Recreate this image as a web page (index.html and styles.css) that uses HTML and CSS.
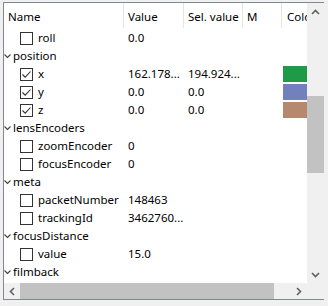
FILE: index.html
```html
<!DOCTYPE html>
<html>
<head>
<meta charset="utf-8">
<link rel="stylesheet" href="styles.css">
</head>
<body>
<div class="tree">
  <div class="viewport">
    <div class="header">
      <div class="c c1">Name</div>
      <div class="c c2">Value</div>
      <div class="c c3">Sel. value</div>
      <div class="c c4">M</div>
      <div class="c c5">Color</div>
    </div>
    <div class="rows">
      <div class="row"><div class="c c1 child"><span class="cb"></span>roll</div><div class="c c2">0.0</div><div class="c c3"></div><div class="c c4"></div><div class="c c5"></div></div>
      <div class="row"><div class="c c1 parent"><svg class="chev" width="7" height="5" viewBox="0 0 7 5"><path d="M0.5 0.5 L3.5 3.5 L6.5 0.5" fill="none" stroke="#404040" stroke-width="1.1"/></svg>position</div></div>
      <div class="row"><div class="c c1 child"><span class="cb on"><svg width="11" height="11" viewBox="0 0 11 11"><path d="M1.5 5.5 L4.2 8.2 L9.5 2.5" fill="none" stroke="#333" stroke-width="1.1"/></svg></span>x</div><div class="c c2">162.178...</div><div class="c c3">194.924...</div><div class="c c4"></div><div class="c c5"><span class="sw green"></span></div></div>
      <div class="row"><div class="c c1 child"><span class="cb on"><svg width="11" height="11" viewBox="0 0 11 11"><path d="M1.5 5.5 L4.2 8.2 L9.5 2.5" fill="none" stroke="#333" stroke-width="1.1"/></svg></span>y</div><div class="c c2">0.0</div><div class="c c3">0.0</div><div class="c c4"></div><div class="c c5"><span class="sw blue"></span></div></div>
      <div class="row"><div class="c c1 child"><span class="cb on"><svg width="11" height="11" viewBox="0 0 11 11"><path d="M1.5 5.5 L4.2 8.2 L9.5 2.5" fill="none" stroke="#333" stroke-width="1.1"/></svg></span>z</div><div class="c c2">0.0</div><div class="c c3">0.0</div><div class="c c4"></div><div class="c c5"><span class="sw brown"></span></div></div>
      <div class="row"><div class="c c1 parent"><svg class="chev" width="7" height="5" viewBox="0 0 7 5"><path d="M0.5 0.5 L3.5 3.5 L6.5 0.5" fill="none" stroke="#404040" stroke-width="1.1"/></svg>lensEncoders</div></div>
      <div class="row"><div class="c c1 child"><span class="cb"></span>zoomEncoder</div><div class="c c2">0</div></div>
      <div class="row"><div class="c c1 child"><span class="cb"></span>focusEncoder</div><div class="c c2">0</div></div>
      <div class="row"><div class="c c1 parent"><svg class="chev" width="7" height="5" viewBox="0 0 7 5"><path d="M0.5 0.5 L3.5 3.5 L6.5 0.5" fill="none" stroke="#404040" stroke-width="1.1"/></svg>meta</div></div>
      <div class="row"><div class="c c1 child"><span class="cb"></span>packetNumber</div><div class="c c2">148463</div></div>
      <div class="row"><div class="c c1 child"><span class="cb"></span>trackingId</div><div class="c c2">3462760...</div></div>
      <div class="row"><div class="c c1 parent"><svg class="chev" width="7" height="5" viewBox="0 0 7 5"><path d="M0.5 0.5 L3.5 3.5 L6.5 0.5" fill="none" stroke="#404040" stroke-width="1.1"/></svg>focusDistance</div></div>
      <div class="row"><div class="c c1 child"><span class="cb"></span>value</div><div class="c c2">15.0</div></div>
      <div class="row"><div class="c c1 parent"><svg class="chev" width="7" height="5" viewBox="0 0 7 5"><path d="M0.5 0.5 L3.5 3.5 L6.5 0.5" fill="none" stroke="#404040" stroke-width="1.1"/></svg>filmback</div></div>
    </div>
  </div>
  <div class="vscroll">
    <div class="btn"><svg width="9" height="6" viewBox="0 0 9 6"><path d="M1 5 L4.5 1.5 L8 5" fill="none" stroke="#606060" stroke-width="1.6"/></svg></div>
    <div class="vtrack"><div class="vthumb"></div></div>
    <div class="btn"><svg width="9" height="6" viewBox="0 0 9 6"><path d="M1 1 L4.5 4.5 L8 1" fill="none" stroke="#606060" stroke-width="1.6"/></svg></div>
  </div>
  <div class="hscroll">
    <div class="btn"><svg width="6" height="9" viewBox="0 0 6 9"><path d="M5 1 L1.5 4.5 L5 8" fill="none" stroke="#606060" stroke-width="1.6"/></svg></div>
    <div class="htrack"><div class="hthumb"></div></div>
    <div class="btn"><svg width="6" height="9" viewBox="0 0 6 9"><path d="M1 1 L4.5 4.5 L1 8" fill="none" stroke="#606060" stroke-width="1.6"/></svg></div>
  </div>
  <div class="corner"></div>
</div>
</body>
</html>
```
FILE: styles.css
```css
html, body {
  margin: 0;
  padding: 0;
  background: #f0f0f0;
}
body {
  padding: 2px 0 0 3px;
  font-family: "Noto Sans", "Open Sans", sans-serif;
  font-size: 11.5px;
  color: #000;
}
.tree {
  box-sizing: border-box;
  width: 321px;
  height: 298px;
  border: 1px solid #828790;
  background: #fff;
  display: grid;
  grid-template-columns: 303px 17px;
  grid-template-rows: 280px 16px;
}
.viewport {
  overflow: hidden;
  display: flex;
  flex-direction: column;
}
.header {
  display: flex;
  height: 25px;
  flex: none;
}
.header .c {
  border-right: 1px solid #e5e5e5;
  line-height: 23px;
  padding-top: 2px;
  box-sizing: border-box;
}
.row {
  display: flex;
  height: 18px;
  line-height: 18px;
  padding-top: 1px;
  margin-bottom: -1px;
}
.c {
  flex: none;
  padding-left: 4px;
  box-sizing: border-box;
  white-space: nowrap;
  overflow: hidden;
  display: flex;
  align-items: center;
}
.c1 { width: 120px; }
.c2 { width: 60px; }
.c3 { width: 59px; }
.c4 { width: 39px; }
.c5 { width: 60px; padding-left: 5px; }
.row .c5 { padding-left: 1px; }
.parent { padding-left: 0; }
.chev { margin: 1px 2px 0 0; }
.child { padding-left: 16px; }
.cb {
  box-sizing: border-box;
  width: 13px;
  height: 13px;
  border: 1px solid #333;
  background: #fff;
  margin-right: 5px;
  flex: none;
  display: flex;
  align-items: center;
  justify-content: center;
}
.sw {
  display: block;
  width: 40px;
  height: 16px;
  margin-top: -1px;
}
.green { background: #1f9a47; }
.blue { background: #7181bd; }
.brown { background: #b4896d; }
.vscroll {
  grid-row: 1;
  grid-column: 2;
  background: #f0f0f0;
  display: flex;
  flex-direction: column;
}
.btn {
  flex: none;
  width: 17px;
  height: 17px;
  display: flex;
  align-items: center;
  justify-content: center;
}
.vtrack {
  flex: 1;
  padding-top: 76px;
}
.vthumb {
  width: 17px;
  height: 77px;
  background: #c2c2c2;
}
.hscroll {
  grid-row: 2;
  grid-column: 1;
  background: #f0f0f0;
  display: flex;
}
.hscroll .btn {
  width: 16px;
  height: 16px;
}
.htrack {
  flex: 1;
}
.hthumb {
  width: 254px;
  height: 16px;
  background: #c2c2c2;
}
.corner {
  grid-row: 2;
  grid-column: 2;
  background: #f0f0f0;
}
```
